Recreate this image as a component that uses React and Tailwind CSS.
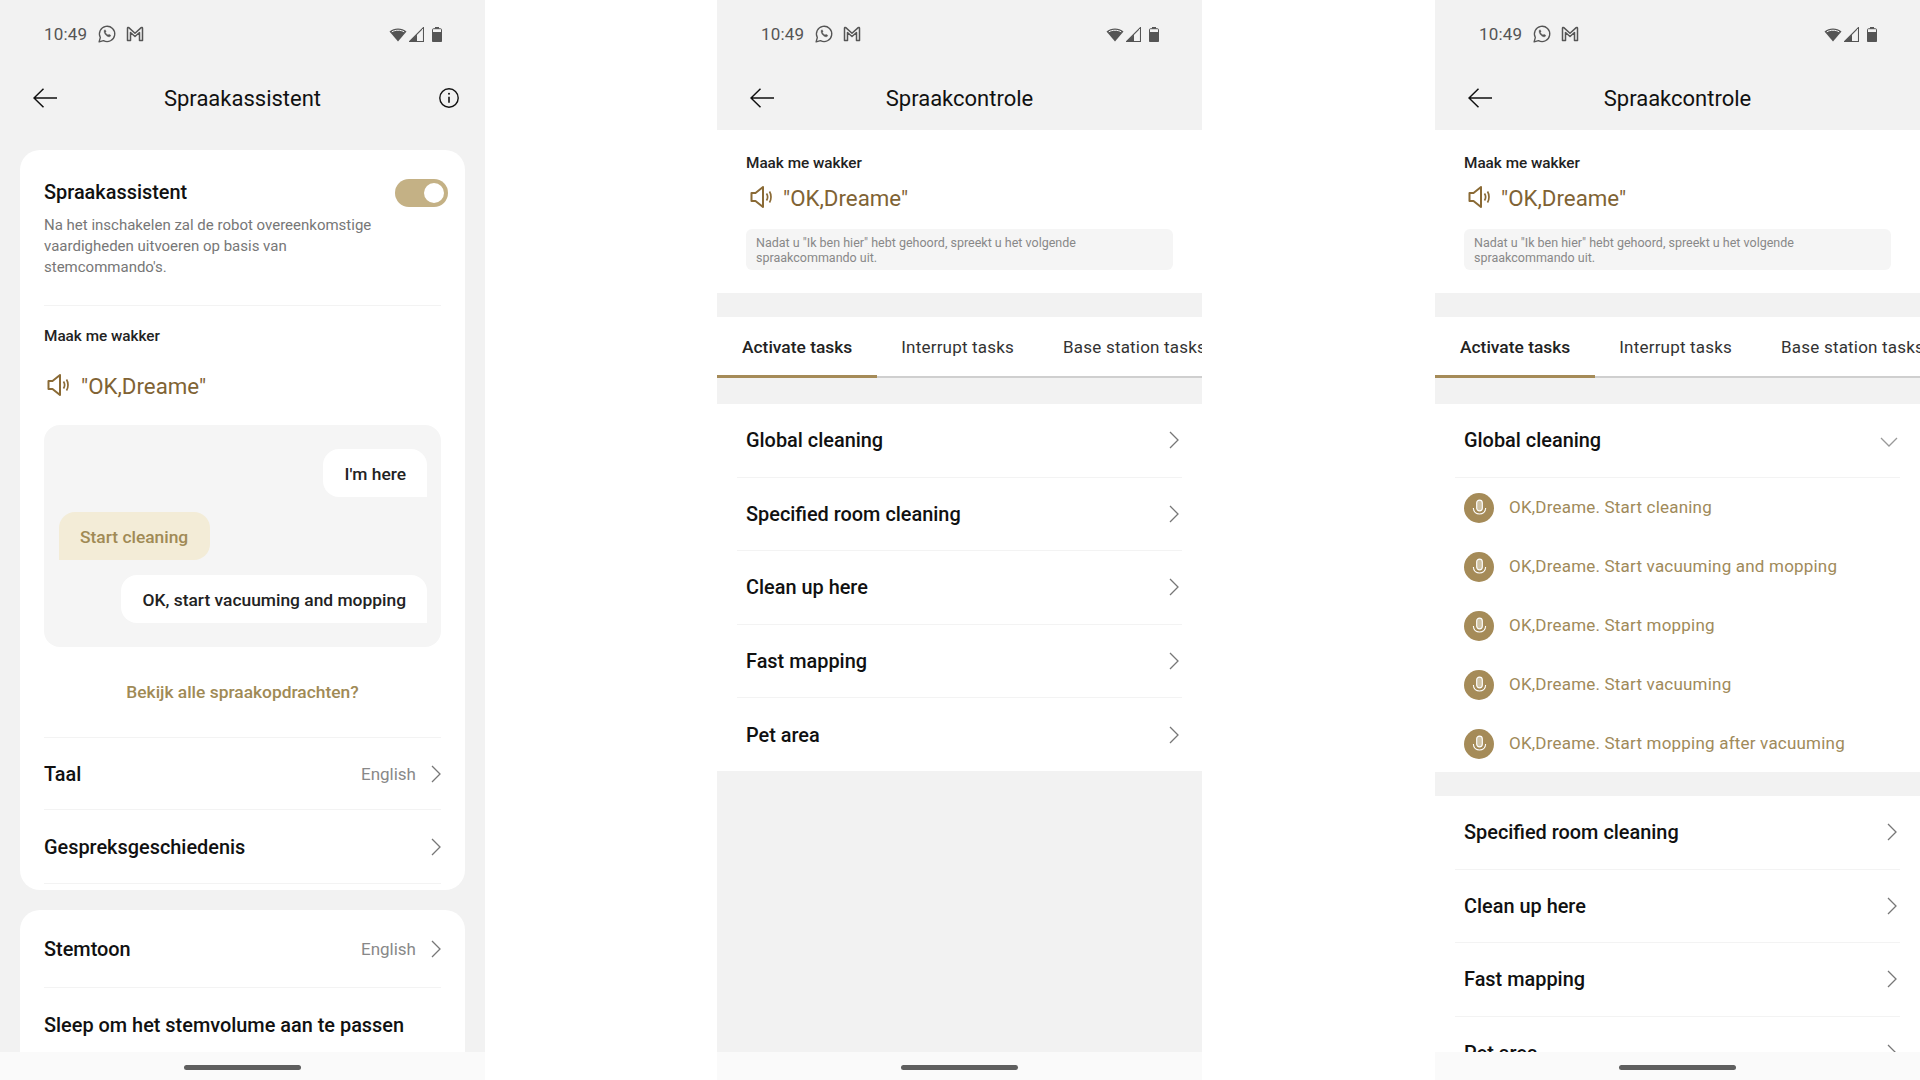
const font = "font-['Roboto',sans-serif]";

function Whatsapp() {
  return (
    <svg viewBox="0 0 24 24" className="w-[20px] h-[20px]" fill="none" stroke="#555" strokeWidth="1.600" strokeLinejoin="round">
      <path d="M2.500 21.500l1.500-5.300A9.200 9.200 0 1 1 7.800 20z" />
      <path d="M8.600 7.800c.4-.9 1-.9 1.400-.7l.9 2-.8 1.100c.7 1.400 1.700 2.400 3.200 3.100l1.100-.9 2 1c.1.800-.3 1.600-1.200 1.900-3.100.5-7.400-3.500-6.600-7.500z" fill="#555" strokeWidth="0.400" />
    </svg>
  );
}

function Gmail() {
  return (
    <svg viewBox="0 0 18 16" className="w-[18px] h-[16px]" fill="none" stroke="#555" strokeWidth="1.500" strokeLinejoin="round">
      <path d="M1.500 14.500V2.200c0-.7.800-1 1.300-.6L9 7.200l6.200-5.600c.5-.4 1.300-.1 1.300.6v12.300h-3V6.500L9 10.500 4.500 6.500v8z" />
    </svg>
  );
}

function StatusBar() {
  return (
    <div className="h-[68px] flex items-center justify-between pl-[44px] pr-[43px]">
      <div className="flex items-center">
        <span className="text-[17px] leading-[20px] text-[#555] tracking-[0.2px]">10:49</span>
        <span className="ml-[10px]"><Whatsapp /></span>
        <span className="ml-[9px]"><Gmail /></span>
      </div>
      <div className="flex items-center">
        <svg viewBox="0 0 18 15" className="w-[18px] h-[15px]">
          <path d="M9 14.500L.5 4.500C5 .5 13 .5 17.500 4.500z" fill="#555" />
          <path d="M2.800 4.900C6 2.700 12 2.700 15.200 4.900" stroke="#f2f2f2" strokeWidth="1" fill="none" />
        </svg>
        <svg viewBox="0 0 15 15" className="w-[15px] h-[15px] ml-[2px]">
          <path d="M14.500 .5V14.500H.5z" fill="none" stroke="#555" strokeWidth="1.100" />
          <path d="M8 7.500V14.500H.5z" fill="#555" />
        </svg>
        <svg viewBox="0 0 10 15" className="w-[10px] h-[15px] ml-[8px]">
          <path d="M3 0h4v2H3z" fill="#555" />
          <rect x=".5" y="1.700" width="9" height="12.800" rx="1" fill="#f2f2f2" stroke="#555" />
          <rect x="0" y="5" width="10" height="10" rx="1" fill="#555" />
        </svg>
      </div>
    </div>
  );
}

function TopBar({ title, info }) {
  return (
    <div className="h-[62px] grid grid-cols-[1fr_auto_1fr] items-center px-[33px]">
      <svg viewBox="0 0 24 20" className="w-[24px] h-[20px] -mt-[2px]" fill="none" stroke="#111" strokeWidth="1.500">
        <path d="M24 10H1M10.500 .8L1 10l9.500 9.200" />
      </svg>
      <span className="text-[22px] leading-[30px] text-[#111]">{title}</span>
      <div className="flex justify-end -mr-[7px] -mt-[2px]">
        {info && (
          <svg viewBox="0 0 20 20" className="w-[20px] h-[20px]" fill="none" stroke="#111" strokeWidth="1.400">
            <circle cx="10" cy="10" r="9.200" />
            <path d="M10 8.800v6" strokeWidth="1.600" />
            <circle cx="10" cy="5.800" r="1" fill="#111" stroke="none" />
          </svg>
        )}
      </div>
    </div>
  );
}

function Chevron() {
  return (
    <svg viewBox="0 0 10 18" className="w-[10px] h-[18px]" fill="none" stroke="#777" strokeWidth="1.300">
      <path d="M1 1l8 8-8 8" />
    </svg>
  );
}

function Speaker() {
  return (
    <svg viewBox="0 0 23 22" className="w-[23px] h-[22px]" fill="none" stroke="#8a6a35" strokeWidth="2" strokeLinejoin="round">
      <path d="M1.500 7v8h4l7.500 6V1L5.500 7z" />
      <path d="M16.500 7.500c1.300 2 1.300 5 0 7M19.500 5.500c2 3 2 8 0 11" strokeWidth="1.700" />
    </svg>
  );
}

function Mic() {
  return (
    <div className="w-[30px] h-[30px] rounded-full bg-[#a58b58] flex items-center justify-center shrink-0">
      <svg viewBox="0 0 16 20" className="w-[15px] h-[19px]" fill="none" stroke="#fff" strokeWidth="1.200">
        <rect x="5" y="1" width="6" height="11.500" rx="3" fill="#cfc3a6" />
        <path d="M1.500 9.500c0 8.500 13 8.500 13 0" />
      </svg>
    </div>
  );
}

function HomeBar() {
  return (
    <div className="h-[28px] shrink-0 bg-[#fafafa] flex justify-center pt-[13px]">
      <div className="w-[117px] h-[5px] rounded-full bg-[#5f5f5f]" />
    </div>
  );
}

function SettingRow({ label, value, className }) {
  return (
    <div className={`flex items-center justify-between border-b border-[#f3f3f3] ${className}`}>
      <span className="text-[19.900px] leading-[28px] pt-[2px] font-medium text-[#111]">{label}</span>
      {(value !== undefined) && (
        <div className="flex items-center">
          {value && <span className="text-[17px] leading-[22px] text-[#888] mr-[15px] mt-[1px]">{value}</span>}
          <Chevron />
        </div>
      )}
    </div>
  );
}

function Bubble({ children, gold }) {
  return gold ? (
    <div className="self-start h-[48px] flex items-center pl-[21px] pr-[22px] pt-[2px] rounded-[16px] rounded-bl-none bg-[#f3ecd7] text-[17.400px] font-medium text-[#a08a55]">{children}</div>
  ) : (
    <div className="self-end h-[48px] flex items-center pl-[22px] pr-[21px] pt-[2px] rounded-[16px] rounded-br-none bg-white text-[17.400px] font-medium text-[#222]">{children}</div>
  );
}

function Phone1() {
  return (
    <div className={`w-[485px] h-[1080px] shrink-0 bg-[#f2f2f2] flex flex-col overflow-hidden ${font}`}>
      <StatusBar />
      <TopBar title="Spraakassistent" info />
      <div className="flex-1 min-h-0 overflow-hidden px-[20px] pt-[20px]">
        <div className="bg-white rounded-[20px] px-[24px] h-[740px]">
          <div className="flex items-center justify-between pt-[27px]">
            <span className="text-[19.900px] leading-[28px] pt-[2px] font-medium text-[#111]">Spraakassistent</span>
            <div className="w-[53px] h-[28px] -mr-[7px] mt-[1px] rounded-full bg-[#c4b185] flex items-center justify-end pr-[4px]">
              <div className="w-[20px] h-[20px] rounded-full bg-white" />
            </div>
          </div>
          <p className="mt-[8px] w-[340px] text-[15px] leading-[21px] text-[#777] pb-[27px] box-content">
            Na het inschakelen zal de robot overeenkomstige vaardigheden uitvoeren op basis van stemcommando's.
          </p>
          <div className="border-t border-[#f3f3f3] pt-[20px] text-[15.300px] leading-[20px] font-medium text-[#222]">Maak me wakker</div>
          <div className="mt-[23px] flex items-center h-[32px] pl-[3px]">
            <Speaker />
            <span className="ml-[11px] text-[22.300px] leading-[32px] pt-[2px] text-[#7f6334]">"OK,Dreame"</span>
          </div>
          <div className="mt-[24px] h-[222px] rounded-[16px] bg-[#f5f5f5] pl-[15px] pr-[14px] pt-[24px] flex flex-col gap-[15px]">
            <Bubble>I'm here</Bubble>
            <Bubble gold>Start cleaning</Bubble>
            <Bubble>OK, start vacuuming and mopping</Bubble>
          </div>
          <div className="mt-[33px] mb-[33px] text-center text-[17.400px] leading-[24px] font-medium text-[#a08a55]">Bekijk alle spraakopdrachten?</div>
          <SettingRow label="Taal" value="English" className="h-[73px] border-t" />
          <SettingRow label="Gespreksgeschiedenis" value="" className="h-[74px]" />
        </div>
        <div className="mt-[20px] bg-white rounded-[20px] px-[24px] h-[200px]">
          <SettingRow label="Stemtoon" value="English" className="h-[78px]" />
          <SettingRow label="Sleep om het stemvolume aan te passen" className="h-[74px] border-b-0" />
        </div>
      </div>
      <HomeBar />
    </div>
  );
}

function ListRow({ label, open, last }) {
  return (
    <div className={`h-[73.500px] shrink-0 mx-[20px] pl-[9px] pr-[3px] flex items-center justify-between ${last ? "" : "border-b border-[#f3f3f3]"}`}>
      <span className="text-[19.900px] leading-[28px] pt-[2px] font-medium text-[#111]">{label}</span>
      {open ? (
        <svg viewBox="0 0 18 10" className="w-[18px] h-[10px] mt-[4px] -mr-[1px]" fill="none" stroke="#999" strokeWidth="1.300">
          <path d="M1 1l8 8 8-8" />
        </svg>
      ) : (
        <Chevron />
      )}
    </div>
  );
}

function VoiceHead() {
  return (
    <div className="bg-white px-[29px] pt-[23px] pb-[23px]">
      <div className="text-[15.300px] leading-[20px] font-medium text-[#222]">Maak me wakker</div>
      <div className="mt-[8px] h-[32px] flex items-center pl-[4px]">
        <Speaker />
        <span className="ml-[10px] text-[22.300px] leading-[32px] pt-[2px] text-[#7f6334]">"OK,Dreame"</span>
      </div>
      <div className="mt-[16px] h-[41px] rounded-[6px] bg-[#f5f5f5] px-[10px] pt-[6px] text-[12.500px] leading-[15px] text-[#888]">
        Nadat u "Ik ben hier" hebt gehoord, spreekt u het volgende spraakcommando uit.
      </div>
    </div>
  );
}

function Tabs() {
  return (
    <div className="mt-[24px] h-[61px] shrink-0 bg-white border-b-2 border-[#cfcfcf] flex whitespace-nowrap">
      <div className="h-[61px] px-[25px] pt-[3px] flex items-center border-b-[3px] border-[#a58b58] text-[17.400px] font-medium text-[#222]">Activate tasks</div>
      <div className="h-[59px] px-[24px] pt-[3px] flex items-center text-[17px] text-[#333] tracking-[0.2px]">Interrupt tasks</div>
      <div className="h-[59px] px-[25px] pt-[3px] flex items-center text-[17px] text-[#333] tracking-[0.2px]">Base station tasks</div>
    </div>
  );
}

function Phone2() {
  const rows = ["Global cleaning", "Specified room cleaning", "Clean up here", "Fast mapping", "Pet area"];
  return (
    <div className={`w-[485px] h-[1080px] shrink-0 ml-[232px] bg-[#f2f2f2] flex flex-col overflow-hidden ${font}`}>
      <StatusBar />
      <TopBar title="Spraakcontrole" />
      <VoiceHead />
      <Tabs />
      <div className="flex-1 min-h-0 overflow-hidden pt-[26px]">
        <div className="bg-white h-[367px]">
          {rows.map((r, i) => <ListRow key={r} label={r} last={i === 4} />)}
        </div>
      </div>
      <HomeBar />
    </div>
  );
}

function Phone3() {
  const cmds = [
    "OK,Dreame. Start cleaning",
    "OK,Dreame. Start vacuuming and mopping",
    "OK,Dreame. Start mopping",
    "OK,Dreame. Start vacuuming",
    "OK,Dreame. Start mopping after vacuuming",
  ];
  return (
    <div className={`w-[485px] h-[1080px] shrink-0 ml-[233px] bg-[#f2f2f2] flex flex-col overflow-hidden ${font}`}>
      <StatusBar />
      <TopBar title="Spraakcontrole" />
      <VoiceHead />
      <Tabs />
      <div className="flex-1 min-h-0 overflow-hidden pt-[26px]">
        <div className="bg-white h-[368px]">
          <ListRow label="Global cleaning" open />
          <div className="pl-[29px] pt-[1px]">
            {cmds.map((c) => (
              <div key={c} className="h-[59px] flex items-center">
                <Mic />
                <span className="ml-[15px] text-[17px] text-[#a08a5a] tracking-[0.2px]">{c}</span>
              </div>
            ))}
          </div>
        </div>
        <div className="mt-[24px] bg-white h-[300px]">
          <ListRow label="Specified room cleaning" />
          <ListRow label="Clean up here" />
          <ListRow label="Fast mapping" />
          <ListRow label="Pet area" last />
        </div>
      </div>
      <HomeBar />
    </div>
  );
}

export default function App() {
  return (
    <div className="w-[1920px] h-[1080px] bg-white flex overflow-hidden">
      <Phone1 />
      <Phone2 />
      <Phone3 />
    </div>
  );
}
